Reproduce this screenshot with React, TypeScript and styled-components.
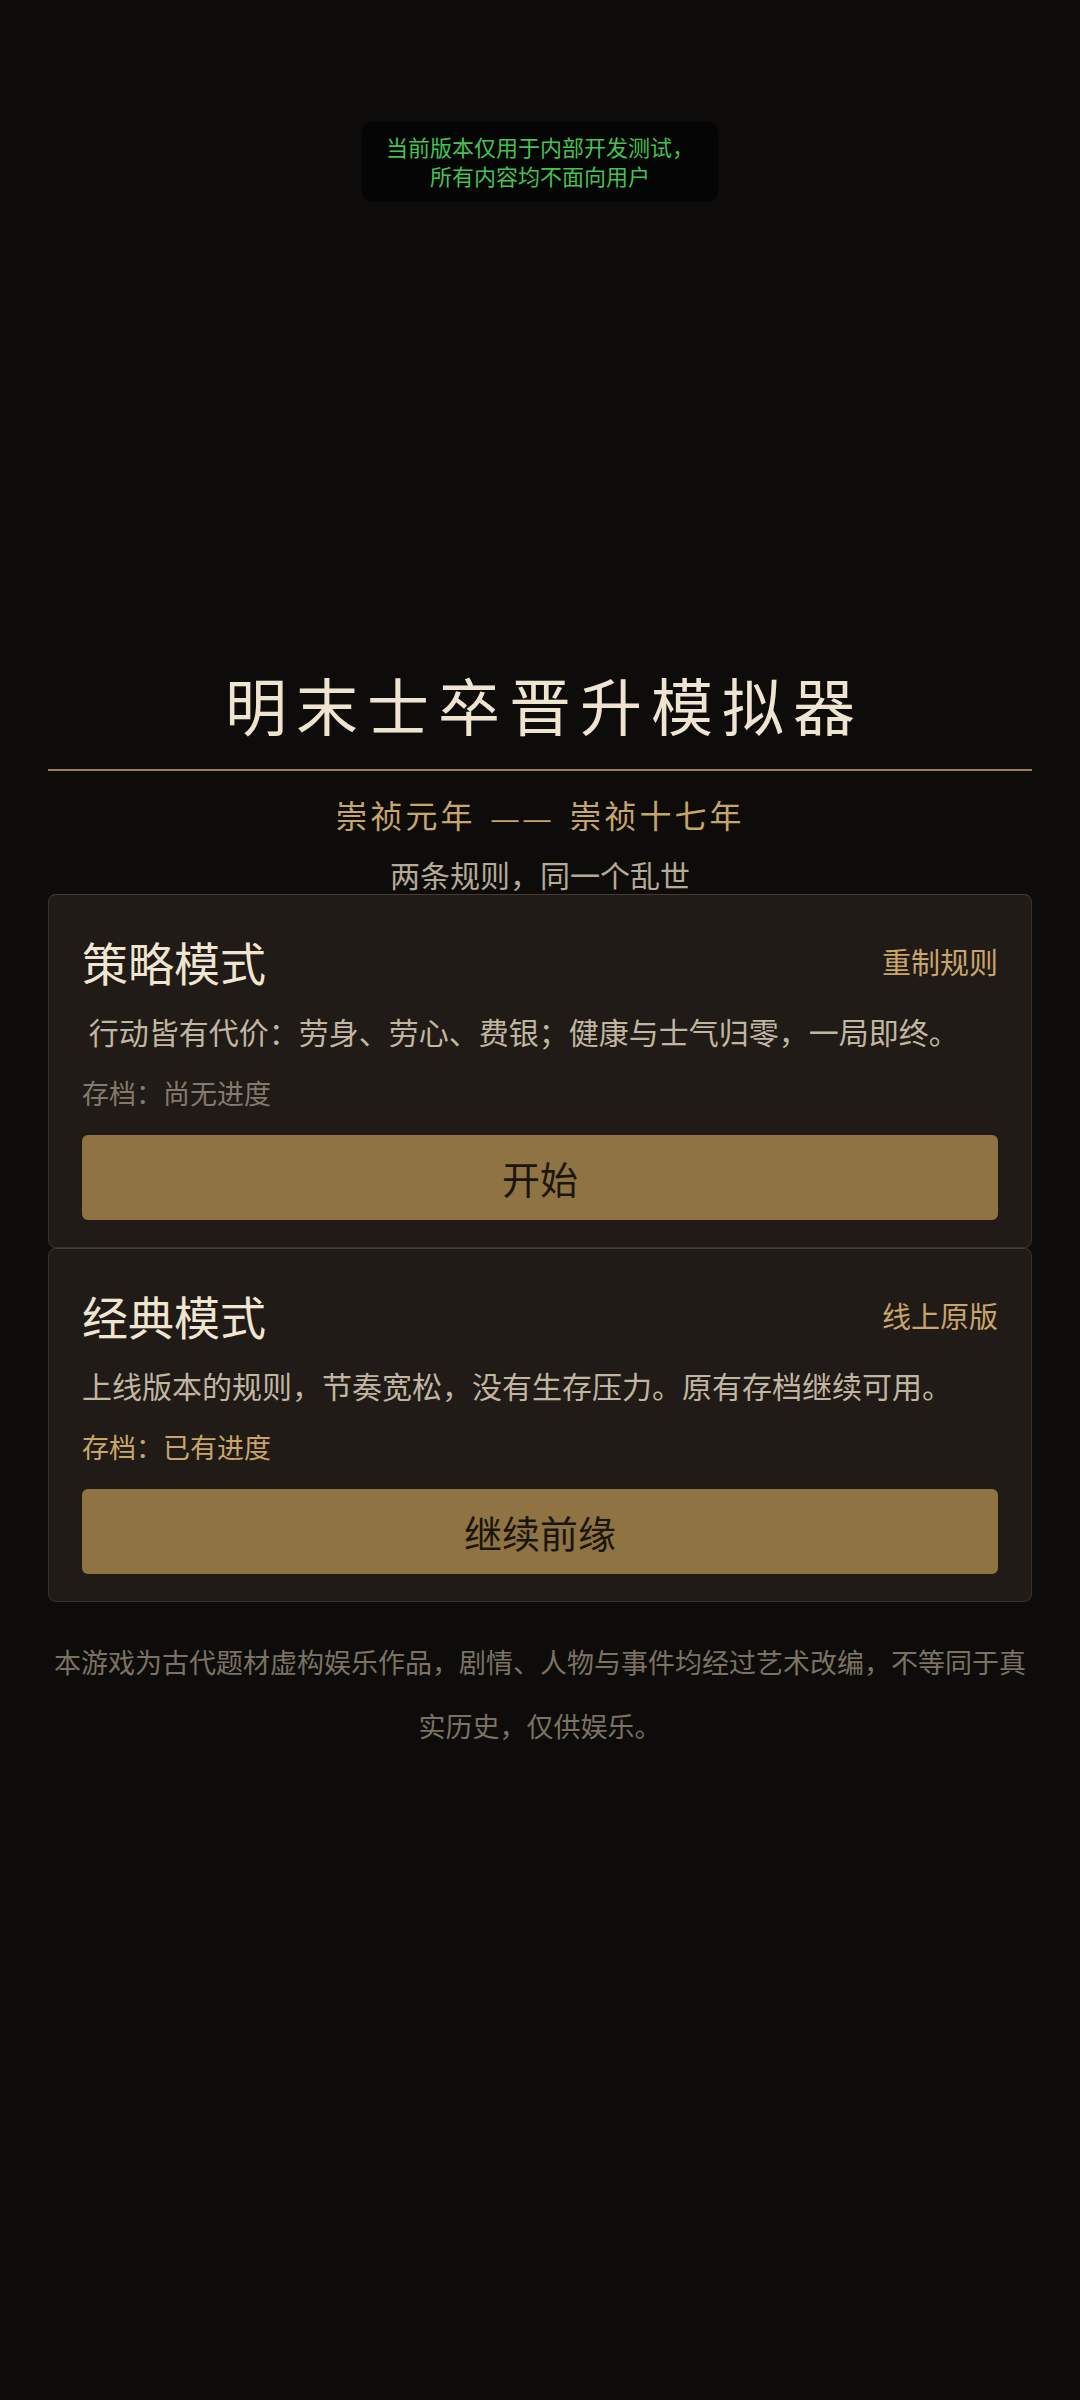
import React from 'react'
import styled, { createGlobalStyle } from 'styled-components'

const GlobalStyle = createGlobalStyle`
  html, body {
    margin: 0;
    padding: 0;
    background: #0e0c0b;
  }
  body {
    font-family: "Noto Sans CJK SC", "Noto Sans", sans-serif;
    -webkit-font-smoothing: antialiased;
  }
`

const Page = styled.main`
  min-height: 100vh;
  box-sizing: border-box;
  padding: 24px 48px 0;
  display: flex;
  flex-direction: column;
  justify-content: center;
  background: #0e0c0b;
`

const Toast = styled.div`
  position: fixed;
  top: 122px;
  left: 50%;
  transform: translateX(-50%);
  width: 356px;
  box-sizing: border-box;
  padding: 10px 12px 12px;
  border-radius: 10px;
  background: #050505;
  color: #46c153;
  font-size: 22px;
  line-height: 29px;
  text-align: center;
`

const Title = styled.h1`
  margin: 0;
  padding-left: 9px;
  font-size: 62px;
  line-height: 74px;
  font-weight: 400;
  letter-spacing: 9px;
  text-align: center;
  color: #eee4d0;
`

const Divider = styled.div`
  margin-top: 28px;
  height: 2px;
  background: #9a8257;
`

const Era = styled.p`
  margin: 21px 0 0;
  font-size: 32px;
  line-height: 44px;
  letter-spacing: 3px;
  text-align: center;
  color: #c8a56b;
`

const Dash = styled.span`
  display: inline-block;
  margin: 0 14px 0 16px;
  font-family: "Liberation Sans", sans-serif;
  font-size: 27px;
  letter-spacing: 5px;
`

const Tagline = styled.p`
  margin: 14px 0 0;
  font-size: 30px;
  line-height: 39px;
  text-align: center;
  color: #b4aa96;
`

const Card = styled.section`
  border: 1px solid #3a3129;
  border-top-color: #463c32;
  border-radius: 8px;
  background: #201b17;
  padding: 0 33px 27px;
`

const CardHeader = styled.div`
  margin-top: 36px;
  height: 60px;
  display: flex;
  align-items: center;
  justify-content: space-between;
`

const CardTitle = styled.h2`
  margin: 0;
  font-size: 46px;
  line-height: 60px;
  font-weight: 400;
  color: #efe5d1;
`

const Tag = styled.span`
  font-size: 29px;
  color: #c9a56b;
`

const Desc = styled.p`
  margin: 19px 0 0;
  font-size: 30px;
  line-height: 42px;
  color: #c1b6a2;
  white-space: pre;
`

const Save = styled.p<{ $has: boolean }>`
  margin: 21px 0 0;
  font-size: 27px;
  line-height: 40px;
  color: ${(p) => (p.$has ? '#c9a56b' : '#837a6d')};
`

const ActionButton = styled.button`
  margin-top: 22px;
  width: 100%;
  height: 85px;
  border: none;
  border-radius: 6px;
  background: #8f7343;
  color: #1b150f;
  font-family: inherit;
  font-size: 38px;
  cursor: pointer;
`

const Footer = styled.p`
  margin: 28px 0 0;
  font-size: 27px;
  line-height: 64px;
  text-align: center;
  color: #7b7263;
`

interface Mode {
  id: string
  title: string
  tag: string
  desc: string
  hasSave: boolean
  action: string
}

const modes: Mode[] = [
  {
    id: 'strategy',
    title: '策略模式',
    tag: '重制规则',
    desc: '\u00a0行动皆有代价：劳身、劳心、费银；健康与士气归零，一局即终。',
    hasSave: false,
    action: '开始',
  },
  {
    id: 'classic',
    title: '经典模式',
    tag: '线上原版',
    desc: '上线版本的规则，节奏宽松，没有生存压力。原有存档继续可用。',
    hasSave: true,
    action: '继续前缘',
  },
]

const App: React.FC = () => {
  return (
    <>
      <GlobalStyle />
      <Toast>
        当前版本仅用于内部开发测试，
        <br />
        所有内容均不面向用户
      </Toast>
      <Page>
        <Title>明末士卒晋升模拟器</Title>
        <Divider />
        <Era>
          崇祯元年<Dash>——</Dash>崇祯十七年
        </Era>
        <Tagline>两条规则，同一个乱世</Tagline>
        {modes.map((mode) => (
          <Card key={mode.id}>
            <CardHeader>
              <CardTitle>{mode.title}</CardTitle>
              <Tag>{mode.tag}</Tag>
            </CardHeader>
            <Desc>{mode.desc}</Desc>
            <Save $has={mode.hasSave}>
              存档：{mode.hasSave ? '已有进度' : '尚无进度'}
            </Save>
            <ActionButton>{mode.action}</ActionButton>
          </Card>
        ))}
        <Footer>
          本游戏为古代题材虚构娱乐作品，剧情、人物与事件均经过艺术改编，不等同于真实历史，仅供娱乐。
        </Footer>
      </Page>
    </>
  )
}

export default App
